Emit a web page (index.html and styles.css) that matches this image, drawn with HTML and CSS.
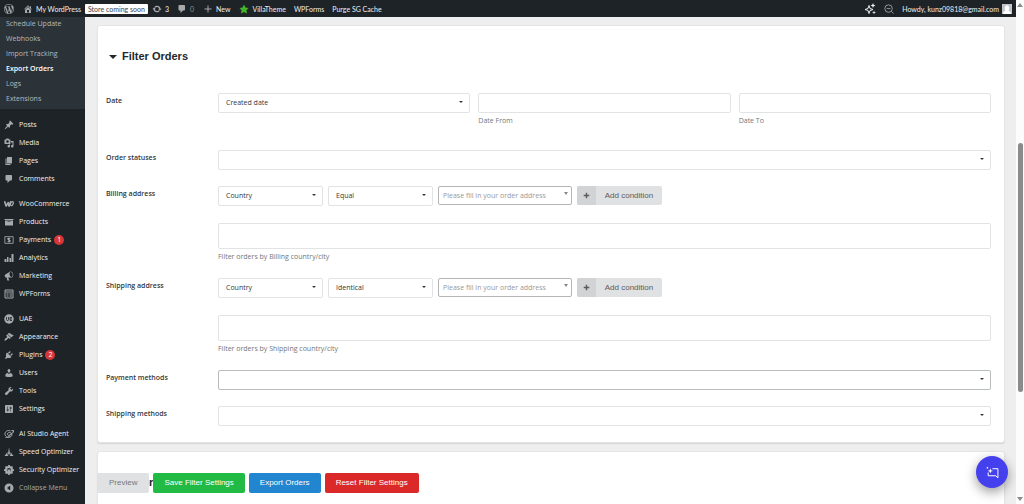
FILE: index.html
```
<!DOCTYPE html>
<html lang="en">
<head>
    <meta charset="UTF-8">
    <meta name="viewport" content="width=device-width, initial-scale=1.0">
    <title>Export Orders</title>
    <link rel="stylesheet" href="styles.css">
</head>
<body>
    <!-- Icon shapes -->
    <svg class="sprite" aria-hidden="true">
        <symbol id="i-wp" viewBox="0 0 20 20"><path d="M20 10c0-5.51-4.49-10-10-10C4.48 0 0 4.49 0 10c0 5.52 4.48 10 10 10 5.51 0 10-4.48 10-10zM7.78 15.37L4.37 6.22c.55-.02 1.17-.08 1.17-.08.5-.06.44-1.13-.06-1.11 0 0-1.45.11-2.37.11-.18 0-.37 0-.58-.01C4.12 2.69 6.87 1.11 10 1.11c2.33 0 4.45.87 6.05 2.34-.68-.11-1.65.39-1.65 1.58 0 .74.45 1.36.9 2.1.35.61.55 1.36.55 2.46 0 1.49-1.4 5-1.4 5l-3.03-8.37c.54-.02.82-.17.82-.17.5-.05.44-1.25-.06-1.22 0 0-1.44.12-2.38.12-.87 0-2.33-.12-2.33-.12-.5-.03-.56 1.2-.06 1.22l.92.08 1.26 3.41zM17.41 10c.24-.64.74-1.87.43-4.25.7 1.29 1.05 2.71 1.05 4.25 0 3.29-1.73 6.24-4.4 7.78.97-2.59 1.94-5.2 2.92-7.78zM6.1 18.09C3.12 16.65 1.11 13.53 1.11 10c0-1.3.23-2.48.72-3.59C3.25 10.3 4.67 14.2 6.1 18.09zm4.03-6.63l2.58 6.98c-.86.29-1.76.45-2.71.45-.79 0-1.57-.11-2.29-.33.81-2.38 1.62-4.74 2.42-7.1z"/></symbol>
        <symbol id="i-home" viewBox="0 0 20 20"><path d="M16 8.5l1.53 1.53-1.06 1.06L10 4.6l-6.47 6.49-1.06-1.06L10 2.5l4 4v-2h2v4zm-6-2.46l6 5.99V18H4v-5.97zM12 17v-5H8v5h4z"/></symbol>
        <symbol id="i-update" viewBox="0 0 20 20"><path d="M10.2 3.28c3.53 0 6.43 2.61 6.92 6h2.08l-3.5 4-3.5-4h2.32c-.45-1.97-2.21-3.45-4.32-3.45-1.45 0-2.73.71-3.54 1.78L4.95 5.66C6.23 4.2 8.11 3.28 10.2 3.28zm-.4 13.44c-3.52 0-6.43-2.61-6.92-6H.8l3.5-4c1.17 1.33 2.33 2.67 3.5 4H5.48c.45 1.97 2.21 3.45 4.32 3.45 1.45 0 2.73-.71 3.54-1.78l1.71 1.95c-1.28 1.46-3.15 2.38-5.25 2.38z"/></symbol>
        <symbol id="i-comment" viewBox="0 0 20 20"><path d="M5 2h9c1.1 0 2 .9 2 2v7c0 1.1-.9 2-2 2h-2l-5 5v-5H5c-1.1 0-2-.9-2-2V4c0-1.1.9-2 2-2z"/></symbol>
        <symbol id="i-plus" viewBox="0 0 20 20"><path d="M17 9v2h-6v6H9v-6H3V9h6V3h2v6z"/></symbol>
        <symbol id="i-bold-plus" viewBox="0 0 20 20"><path d="M18 8v4h-6v6H8v-6H2V8h6V2h4v6z"/></symbol>
        <symbol id="i-star" viewBox="0 0 20 20"><path d="M10 1l3 6 6 .75-4.12 4.62L16 19l-6-3-6 3 1.13-6.63L1 7.75 7 7z"/></symbol>
        <symbol id="i-sparkle" viewBox="0 0 24 24"><path fill="none" stroke="currentColor" stroke-width="2" d="M10 5l2 6 6 2-6 2-2 6-2-6-6-2 6-2z"/><path d="M18 0l1.400 3.600L23 5l-3.600 1.400L18 10l-1.400-3.600L13 5l3.600-1.400zM20 15l1 3 3 1-3 1-1 3-1-3-3-1 3-1z"/></symbol>
        <symbol id="i-zoomout" viewBox="0 0 24 24"><path fill="none" stroke="currentColor" stroke-width="2" d="M17.500 17.500L23 23M2 11a9 9 0 1 0 18 0a9 9 0 1 0-18 0M6.500 11h9"/></symbol>
        <symbol id="i-post" viewBox="0 0 20 20"><path d="M10.440 3.020l1.820-1.820 6.360 6.350-1.830 1.820c-1.050-.68-2.480-.57-3.410.36l-.75.75c-.92.93-1.040 2.350-.35 3.410l-1.830 1.820-2.410-2.410-2.800 2.790c-.42.42-3.380 2.710-3.800 2.290s1.860-3.390 2.280-3.810l2.790-2.790L4.100 9.360l1.830-1.820c1.050.69 2.480.57 3.400-.36l.75-.75c.93-.92 1.050-2.350.36-3.410z"/></symbol>
        <symbol id="i-media" viewBox="0 0 20 20"><path d="M13 11V4c0-.55-.45-1-1-1h-1.670L9 1H5L3.670 3H2c-.55 0-1 .45-1 1v7c0 .55.45 1 1 1h10c.55 0 1-.45 1-1zM7 4.500c1.380 0 2.500 1.120 2.500 2.500S8.380 9.500 7 9.500 4.500 8.380 4.500 7 5.620 4.500 7 4.500zM14 6h5v10.500c0 1.380-1.120 2.500-2.500 2.500S14 17.880 14 16.500s1.120-2.500 2.500-2.500c.17 0 .34.02.5.05V9h-3V6zm-4 8.050V13h2v3.500c0 1.380-1.120 2.500-2.500 2.500S7 17.880 7 16.500 8.120 14 9.500 14c.17 0 .34.02.5.05z"/></symbol>
        <symbol id="i-page" viewBox="0 0 20 20"><path d="M6 15V2h10v13H6zm-1 1h8v2H3V5h2v11z"/></symbol>
        <symbol id="i-woo" viewBox="0 0 24 20"><path fill="none" stroke="currentColor" stroke-width="4" stroke-linejoin="round" stroke-linecap="round" d="M2 5l3 10 5-8 2 8 4-10"/><ellipse cx="19" cy="9" rx="3" ry="5" transform="rotate(20 19 9)" fill="none" stroke="currentColor" stroke-width="3"/></symbol>
        <symbol id="i-archive" viewBox="0 0 20 20"><path d="M19 4v2H1V4h18zM2 7h16v10H2V7zm11 3V9H7v1h6z"/></symbol>
        <symbol id="i-payments" viewBox="0 0 24 20"><path fill="none" stroke="currentColor" stroke-width="2" d="M2 2h20v16H2z"/><path fill="none" stroke="currentColor" stroke-width="2.500" d="M15 7c-1-1.500-6-1.500-6 .7 0 2.600 6 1.600 6 4.300 0 2.300-5 2.300-6 .5M12 4v12"/></symbol>
        <symbol id="i-analytics" viewBox="0 0 20 20"><path d="M1 12h4v6H1zM6 8h3v10H6zM11 10h3v8h-3zM15 2h4v16h-4z"/></symbol>
        <symbol id="i-megaphone" viewBox="0 0 20 20"><path d="M18.150 5.940c.46 1.620.38 3.220-.02 4.480-.42 1.280-1.260 2.180-2.300 2.480-.16.06-.26.06-.4.06-.06.02-.12.02-.18.02-.06.02-.14.02-.22.02h-6.800l2.220 5.500c.02.14-.06.26-.14.34-.08.1-.24.16-.34.16H6.950c-.1 0-.26-.06-.34-.16-.08-.08-.16-.2-.14-.34l-1-5.500H4.250l-.02-.02c-.5.06-1.080-.18-1.540-.62s-.88-1.080-1.060-1.880c-.24-.8-.2-1.560-.02-2.200.18-.62.58-1.080 1.060-1.300l.02-.02 9-5.400c.1-.06.18-.1.24-.16.06-.04.14-.08.24-.12.16-.08.28-.12.5-.18 1.040-.3 2.240.1 3.220.98s1.840 2.240 2.260 3.860zm-2.580 5.980h-.02c.4-.1.74-.34 1.040-.7.58-.7.86-1.760.86-3.040 0-.64-.1-1.300-.28-1.980-.34-1.360-1.020-2.500-1.780-3.240s-1.680-1.100-2.460-.88c-.82.22-1.400.96-1.700 2-.32 1.040-.28 2.360.06 3.720.38 1.360 1 2.500 1.800 3.240.78.74 1.620 1.100 2.480.88z"/></symbol>
        <symbol id="i-forms" viewBox="0 0 20 20"><path fill="none" stroke="currentColor" stroke-width="2" d="M2 2h16v16H2zM3 6h14M5 10h4M11 10h5M5 14h4M11 14h5"/></symbol>
        <symbol id="i-uae" viewBox="0 0 20 20"><circle cx="10" cy="10" r="9.500"/><path fill="none" stroke="#1d2327" stroke-width="1.600" d="M5 6v5c0 3 4 3 4 0V6M16 7h-4v6h4M12 10h4"/></symbol>
        <symbol id="i-brush" viewBox="0 0 20 20"><path d="M14.480 11.060L7.410 3.990l1.500-1.500c.5-.56 2.300-.47 3.510.32 1.210.8 1.430 1.280 2.910 2.100 1.180.64 2.450 1.260 4.450.85zm-.71.71L6.700 4.700 4.930 6.470c-.39.39-.39 1.020 0 1.410l1.060 1.060c.39.39.39 1.030 0 1.420-.6.6-1.430 1.110-2.210 1.690-.35.26-.7.53-1.010.84C1.430 14.230.4 16.080 1.400 17.070c.99 1 2.840-.03 4.180-1.360.31-.31.58-.66.85-1.020.57-.78 1.080-1.610 1.690-2.210.39-.39 1.020-.39 1.410 0l1.060 1.060c.39.39 1.020.39 1.410 0z"/></symbol>
        <symbol id="i-plugin" viewBox="0 0 20 20"><path d="M13.110 4.360L9.870 7.600 8 5.730l3.240-3.240c.35-.34 1.050-.2 1.560.32.52.51.66 1.210.31 1.550zm-8 1.770l.91-1.120 9.010 9.010-1.190.84c-.71.71-2.630 1.160-3.820 1.160H6.140L4.900 17.260c-.59.59-1.540.59-2.120 0-.59-.58-.59-1.530 0-2.120l1.240-1.240v-3.880c0-1.130.4-3.190 1.090-3.890zm7.260 3.970l3.240-3.240c.34-.35 1.040-.21 1.550.31.52.51.66 1.210.31 1.550l-3.240 3.250z"/></symbol>
        <symbol id="i-user" viewBox="0 0 20 20"><path d="M10 9.250c-2.270 0-2.730-3.440-2.730-3.440C7 4.020 7.820 2 9.970 2c2.160 0 2.980 2.020 2.710 3.810 0 0-.41 3.440-2.680 3.440zm0 2.570L12.720 10c2.390 0 4.520 2.330 4.520 4.530v2.490s-3.650 1.130-7.240 1.130c-3.650 0-7.240-1.130-7.240-1.130v-2.490c0-2.250 1.940-4.480 4.470-4.480z"/></symbol>
        <symbol id="i-tool" viewBox="0 0 20 20"><path d="M16.680 9.770c-1.340 1.340-3.300 1.670-4.950.99l-5.410 6.520c-.99.99-2.590.99-3.580 0s-.99-2.590 0-3.570l6.520-5.420c-.68-1.650-.35-3.610.99-4.950 1.280-1.280 3.120-1.620 4.720-1.060l-2.890 2.890 2.820 2.820 2.860-2.870c.53 1.580.18 3.390-1.080 4.650z"/></symbol>
        <symbol id="i-settings" viewBox="0 0 20 20"><path d="M18 16V4c0-1.100-.9-2-2-2H4c-1.100 0-2 .9-2 2v12c0 1.100.9 2 2 2h12c1.100 0 2-.9 2-2zM8 11h1c.55 0 1 .45 1 1s-.45 1-1 1H8v1.500c0 .28-.22.5-.5.5s-.5-.22-.5-.5V13H6c-.55 0-1-.45-1-1s.45-1 1-1h1V5.500c0-.28.22-.5.5-.5s.5.22.5.5V11zm5-2h-1c-.55 0-1-.45-1-1s.45-1 1-1h1V5.500c0-.28.22-.5.5-.5s.5.22.5.5V7h1c.55 0 1 .45 1 1s-.45 1-1 1h-1v5.500c0 .28-.22.5-.5.5s-.5-.22-.5-.5V9z"/></symbol>
        <symbol id="i-ai" viewBox="0 0 20 20"><path fill="none" stroke="currentColor" stroke-width="2" d="M13 4C7 1 1 6 2 11s7 8 12 4c3-3 2-7-1-8s-7 1-6 4 6 2 6-2M3 17c4 1 12-5 16-13M15 3h4v4"/></symbol>
        <symbol id="i-speed" viewBox="0 0 20 20"><path d="M10 1l2 12-2 3-2-3zM7 10l0 5 2 3H1zM13 10l0 5-2 3h8z"/></symbol>
        <symbol id="i-security" viewBox="0 0 20 20"><circle cx="10" cy="10" r="6" fill="none" stroke="currentColor" stroke-width="4"/><path fill="none" stroke="currentColor" stroke-width="3.500" d="M10 0v4M10 16v4M0 10h4M16 10h4M3 3l3 3M14 14l3 3M17 3l-3 3M6 14l-3 3"/><path d="M7 9h6v5H7z"/></symbol>
        <symbol id="i-collapse" viewBox="0 0 20 20"><path fill-rule="evenodd" d="M10 1a9 9 0 1 0 0 18a9 9 0 1 0 0-18zM12.500 5v10L6 10z"/></symbol>
        <symbol id="i-chat" viewBox="0 0 24 24"><path fill="none" stroke="currentColor" stroke-width="1.800" d="M12 5h10v17l-4-4H4v-6"/><path d="M8 4l1.300 3.700L13 9 9.300 10.300 8 14l-1.300-3.700L3 9l3.700-1.300zM2.500 1l.7 1.800L5 3.500l-1.800.7L2.500 6l-.7-1.800L0 3.500l1.800-.7z"/></symbol>
    </svg>

    <div class="screen">
        <header class="adminbar">
            <a href="#" class="bar-logo" aria-label="About WordPress"><svg class="icon"><use href="#i-wp"/></svg></a>
            <a href="#" class="bar-item"><svg class="icon"><use href="#i-home"/></svg>My WordPress</a>
            <a href="#" class="store-badge">Store coming soon</a>
            <a href="#" class="bar-item bar-updates"><svg class="icon"><use href="#i-update"/></svg>3</a>
            <a href="#" class="bar-item bar-comments"><svg class="icon"><use href="#i-comment"/></svg>0</a>
            <a href="#" class="bar-item bar-new"><svg class="icon"><use href="#i-plus"/></svg>New</a>
            <a href="#" class="bar-item bar-villa"><svg class="icon"><use href="#i-star"/></svg>VillaTheme</a>
            <a href="#" class="bar-item bar-text">WPForms</a>
            <a href="#" class="bar-item bar-text">Purge SG Cache</a>
            <div class="bar-right">
                <a href="#" aria-label="AI assistant"><svg class="icon icon-lg"><use href="#i-sparkle"/></svg></a>
                <a href="#" aria-label="Zoom out"><svg class="icon"><use href="#i-zoomout"/></svg></a>
                <a href="#" class="account">Howdy, kunz09818@gmail.com
                    <svg class="avatar" viewBox="0 0 10 10"><path fill="#c3c4c7" d="M0 0h10v10H0z"/><path fill="#fff" d="M1 10c0-2 1-3 2.500-3.300C2 4 3 1.500 5 1.500S8 4 6.500 6.700C8 7 9 8 9 10z"/></svg>
                </a>
            </div>
        </header>

        <div class="body">
            <nav class="sidebar">
                <ul class="submenu">
                    <li><a href="#">Schedule Update</a></li>
                    <li><a href="#">Webhooks</a></li>
                    <li><a href="#">Import Tracking</a></li>
                    <li><a href="#" class="current">Export Orders</a></li>
                    <li><a href="#">Logs</a></li>
                    <li><a href="#">Extensions</a></li>
                </ul>
                <ul class="menu">
                    <li><a href="#"><svg class="icon"><use href="#i-post"/></svg>Posts</a></li>
                    <li><a href="#"><svg class="icon"><use href="#i-media"/></svg>Media</a></li>
                    <li><a href="#"><svg class="icon"><use href="#i-page"/></svg>Pages</a></li>
                    <li><a href="#"><svg class="icon"><use href="#i-comment"/></svg>Comments</a></li>
                </ul>
                <ul class="menu">
                    <li><a href="#"><svg class="icon"><use href="#i-woo"/></svg>WooCommerce</a></li>
                    <li><a href="#"><svg class="icon"><use href="#i-archive"/></svg>Products</a></li>
                    <li><a href="#"><svg class="icon"><use href="#i-payments"/></svg>Payments <span class="count">1</span></a></li>
                    <li><a href="#"><svg class="icon"><use href="#i-analytics"/></svg>Analytics</a></li>
                    <li><a href="#"><svg class="icon"><use href="#i-megaphone"/></svg>Marketing</a></li>
                    <li><a href="#"><svg class="icon"><use href="#i-forms"/></svg>WPForms</a></li>
                </ul>
                <ul class="menu">
                    <li><a href="#"><svg class="icon"><use href="#i-uae"/></svg>UAE</a></li>
                    <li><a href="#"><svg class="icon"><use href="#i-brush"/></svg>Appearance</a></li>
                    <li><a href="#"><svg class="icon"><use href="#i-plugin"/></svg>Plugins <span class="count">2</span></a></li>
                    <li><a href="#"><svg class="icon"><use href="#i-user"/></svg>Users</a></li>
                    <li><a href="#"><svg class="icon"><use href="#i-tool"/></svg>Tools</a></li>
                    <li><a href="#"><svg class="icon"><use href="#i-settings"/></svg>Settings</a></li>
                </ul>
                <ul class="menu">
                    <li><a href="#"><svg class="icon"><use href="#i-ai"/></svg>AI Studio Agent</a></li>
                    <li><a href="#"><svg class="icon"><use href="#i-speed"/></svg>Speed Optimizer</a></li>
                    <li><a href="#"><svg class="icon"><use href="#i-security"/></svg>Security Optimizer</a></li>
                    <li><button type="button" class="collapse"><svg class="icon"><use href="#i-collapse"/></svg>Collapse Menu</button></li>
                </ul>
            </nav>

            <main class="content">
                <section class="panel">
                    <h2 class="panel-title">Filter Orders</h2>

                    <div class="row row-date">
                        <label class="row-label" for="dateType">Date</label>
                        <div class="thirds">
                            <div class="select"><select id="dateType"><option>Created date</option></select></div>
                            <div>
                                <input type="text" class="field" id="dateFrom">
                                <label class="hint" for="dateFrom">Date From</label>
                            </div>
                            <div>
                                <input type="text" class="field" id="dateTo">
                                <label class="hint" for="dateTo">Date To</label>
                            </div>
                        </div>
                    </div>

                    <div class="row">
                        <label class="row-label" for="statuses">Order statuses</label>
                        <div class="select"><select id="statuses"><option></option></select></div>
                    </div>

                    <div class="row">
                        <label class="row-label" for="billingField">Billing address</label>
                        <div>
                            <div class="conditions">
                                <div class="select select-sm"><select id="billingField"><option>Country</option></select></div>
                                <div class="select select-sm"><select aria-label="Billing condition"><option>Equal</option></select></div>
                                <div class="select select-address"><select aria-label="Billing value"><option>Please fill in your order address</option></select></div>
                                <button type="button" class="add-btn"><span class="add-icon"><svg class="icon-sm"><use href="#i-bold-plus"/></svg></span><span class="add-text">Add condition</span></button>
                            </div>
                            <input type="text" class="field field-tall" id="billingFilter">
                            <label class="hint" for="billingFilter">Filter orders by Billing country/city</label>
                        </div>
                    </div>

                    <div class="row">
                        <label class="row-label" for="shippingField">Shipping address</label>
                        <div>
                            <div class="conditions">
                                <div class="select select-sm"><select id="shippingField"><option>Country</option></select></div>
                                <div class="select select-sm"><select aria-label="Shipping condition"><option>Identical</option></select></div>
                                <div class="select select-address"><select aria-label="Shipping value"><option>Please fill in your order address</option></select></div>
                                <button type="button" class="add-btn"><span class="add-icon"><svg class="icon-sm"><use href="#i-bold-plus"/></svg></span><span class="add-text">Add condition</span></button>
                            </div>
                            <input type="text" class="field field-tall" id="shippingFilter">
                            <label class="hint" for="shippingFilter">Filter orders by Shipping country/city</label>
                        </div>
                    </div>

                    <div class="row">
                        <label class="row-label" for="payment">Payment methods</label>
                        <div class="select select-active"><select id="payment"><option></option></select></div>
                    </div>

                    <div class="row">
                        <label class="row-label" for="shipping">Shipping methods</label>
                        <div class="select"><select id="shipping"><option></option></select></div>
                    </div>
                </section>

                <section class="panel">
                    <h2 class="panel-title">Export</h2>
                </section>

                <div class="actions">
                    <button type="button" class="btn btn-preview">Preview</button>
                    <button type="button" class="btn btn-save">Save Filter Settings</button>
                    <button type="button" class="btn btn-export">Export Orders</button>
                    <button type="button" class="btn btn-reset">Reset Filter Settings</button>
                </div>
                <button type="button" class="chat" aria-label="Open chat"><svg><use href="#i-chat"/></svg></button>
            </main>
        </div>
    </div>

    <div class="scrollbar">
        <span class="arrow arrow-up"></span>
        <span class="thumb"></span>
        <span class="arrow arrow-down"></span>
    </div>
</body>
</html>
```
FILE: styles.css
```
* {
    box-sizing: border-box;
}
body {
    margin: 0;
    height: 100vh;
    display: flex;
    overflow: hidden;
    background: #eeeeee;
    font-family: "Open Sans", "Noto Sans", sans-serif;
    font-size: 7px;
    line-height: 10px;
    color: #32373c;
}
a {
    color: inherit;
    text-decoration: none;
}
ul {
    list-style: none;
    margin: 0;
    padding: 0;
}
button, input, select {
    font: inherit;
    color: inherit;
    margin: 0;
}
button {
    border: none;
    cursor: pointer;
}
.sprite {
    display: none;
}
.icon {
    width: 10px;
    height: 10px;
    flex: none;
    fill: currentColor;
    color: #a7aaad;
}
.icon-lg {
    width: 12px;
    height: 12px;
    color: #f0f0f1;
}
.icon-sm {
    width: 7px;
    height: 7px;
    fill: currentColor;
}
.screen {
    flex: 1;
    min-width: 0;
    display: flex;
    flex-direction: column;
}

/* Admin bar */
.adminbar {
    flex: none;
    height: 17px;
    display: flex;
    align-items: center;
    background: #1d2327;
    color: #f0f0f1;
    font-family: Lato, "Open Sans", sans-serif;
    white-space: nowrap;
    padding: 0 4px;
}
.adminbar a {
    display: flex;
    align-items: center;
}
.bar-logo {
    margin-right: 9px;
}
.bar-item {
    gap: 3px;
}
.adminbar .store-badge {
    background: #fff;
    color: #3c434a;
    border-radius: 1px;
    padding: 0 3px;
    margin: 0 4px;
}
.bar-updates {
    margin-right: 8px;
}
.bar-comments {
    margin-right: 9px;
    color: #8c8f94;
}
.bar-new {
    margin-right: 9px;
}
.bar-villa .icon {
    color: #46b22c;
}
.bar-text {
    margin-left: 8px;
}
.bar-right {
    margin-left: auto;
    display: flex;
    gap: 8px;
}
.account {
    gap: 3px;
}
.avatar {
    width: 10px;
    height: 10px;
}

/* Sidebar */
.body {
    flex: 1;
    min-height: 0;
    display: flex;
}
.sidebar {
    flex: none;
    width: 85px;
    background: #1d2327;
    color: #f0f0f1;
    white-space: nowrap;
}
.submenu {
    background: #2c3338;
    color: #b4b9be;
    padding-bottom: 2px;
}
.submenu a {
    display: block;
    padding: 2px 6px 3px;
}
.submenu .current {
    color: #fff;
    font-weight: 600;
}
.menu {
    margin-top: 7px;
}
.menu a, .collapse {
    display: flex;
    align-items: center;
    gap: 5px;
    height: 18px;
    padding: 0 4px;
}
.collapse {
    background: none;
    color: #a7aaad;
}
.count {
    background: #d63638;
    color: #fff;
    border-radius: 5px;
    width: 10px;
    text-align: center;
    margin-left: -2px;
}

/* Panels */
.content {
    flex: 1;
    min-width: 0;
    position: relative;
    overflow: hidden;
    padding: 8px 11px 0 12px;
}
.panel {
    background: #fff;
    border: 1px solid #e4e5e6;
    border-radius: 3px;
    box-shadow: 0 1px 1px rgba(34, 36, 38, 0.12);
    padding: 24px 13px 16px 8px;
    margin-bottom: 8px;
}
.panel-title {
    display: flex;
    align-items: center;
    gap: 5px;
    margin: 0 0 30px 3px;
    font-family: "Liberation Sans", Arial, sans-serif;
    font-size: 11px;
    line-height: 13px;
    color: #23282d;
}
.panel-title::before {
    content: "";
    border: 4px solid transparent;
    border-top-color: #23282d;
    border-bottom: none;
}
.row {
    display: grid;
    grid-template-columns: 112px 1fr;
    margin-bottom: 16px;
}
.row:last-child {
    margin-bottom: 0;
}
.row-date {
    margin-bottom: 24px;
}
.row-label {
    font-weight: 600;
    padding-top: 3px;
}
.thirds {
    display: grid;
    grid-template-columns: repeat(3, 1fr);
    gap: 8px;
}
.field, .select select {
    display: block;
    width: 100%;
    height: 20px;
    padding: 0 7px;
    background: #fff;
    border: 1px solid #e2e3e4;
    border-radius: 2px;
    appearance: none;
}
.select {
    position: relative;
}
.select::after {
    content: "";
    position: absolute;
    top: 8px;
    right: 7px;
    border: 2px solid transparent;
    border-top-color: #32373c;
    border-bottom: none;
    pointer-events: none;
}
.select.select-active select {
    border-color: #b9bcbe;
}
.select-sm {
    width: 105px;
}
.select-address {
    width: 134px;
    color: #999;
}
.select.select-address select {
    height: 19px;
    padding: 0 4px;
    border-color: #b5b5b5;
}
.select-address::after {
    right: 4px;
    top: 6px;
    border-top: 3px solid #888;
}
.conditions {
    display: flex;
    gap: 5px;
    margin-bottom: 17px;
}
.field.field-tall {
    height: 26px;
}
.hint {
    display: block;
    margin-top: 3px;
    color: #72777c;
}
.add-btn {
    display: flex;
    width: 85px;
    height: 19px;
    padding: 0;
    overflow: hidden;
    border-radius: 2px;
    background: #e0e1e2;
    color: #5a5b5c;
    font-family: "Liberation Sans", Arial, sans-serif;
    font-size: 8px;
    line-height: 19px;
}
.add-icon {
    width: 19px;
    height: 19px;
    display: flex;
    align-items: center;
    justify-content: center;
    background: #d2d3d4;
}
.add-text {
    flex: 1;
    text-align: center;
}

/* Action buttons float over the page bottom */
.actions {
    position: absolute;
    left: 12px;
    bottom: 11px;
    display: flex;
    gap: 4px;
}
.btn {
    height: 20px;
    padding: 0 11px;
    border-radius: 2px;
    color: #fff;
    font-family: "Liberation Sans", Arial, sans-serif;
    font-size: 8px;
}
.btn-preview {
    padding: 0 12px;
    background: #e0e1e2;
    color: #767778;
}
.btn-save {
    background: #21ba45;
}
.btn-export {
    background: #2185d0;
}
.btn-reset {
    background: #db2828;
}
.chat {
    position: absolute;
    right: 8px;
    bottom: 16px;
    width: 32px;
    height: 32px;
    padding: 0;
    border-radius: 50%;
    background: #4540ee;
    color: #fff;
    box-shadow: 0 4px 12px rgba(0, 0, 0, 0.4);
    display: flex;
    align-items: center;
    justify-content: center;
}
.chat svg {
    width: 13px;
    height: 13px;
    fill: currentColor;
}

/* Scrollbar */
.scrollbar {
    flex: none;
    width: 8px;
    background: #fcfcfc;
    display: flex;
    flex-direction: column;
    align-items: center;
    padding: 3px 0;
}
.arrow {
    border: 3px solid transparent;
}
.arrow-up {
    border-top: none;
    border-bottom: 4px solid #8b8b8b;
}
.arrow-down {
    border-bottom: none;
    border-top: 4px solid #8b8b8b;
    margin-top: auto;
}
.thumb {
    width: 5px;
    height: 50%;
    margin-top: 27vh;
    border-radius: 3px;
    background: #8b8b8b;
}
```
